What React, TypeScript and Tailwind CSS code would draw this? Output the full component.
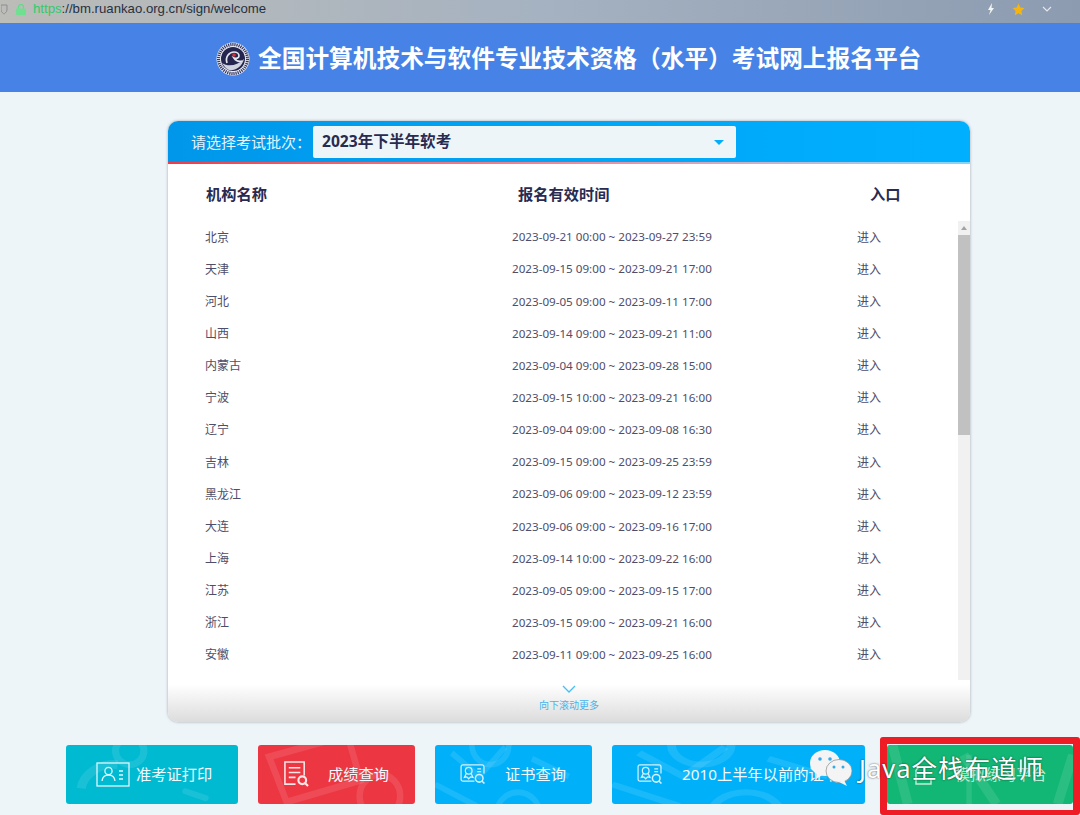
import type { ReactNode } from "react";

const rows = [
  ["北京", "2023-09-21 00:00 ~ 2023-09-27 23:59"],
  ["天津", "2023-09-15 09:00 ~ 2023-09-21 17:00"],
  ["河北", "2023-09-05 09:00 ~ 2023-09-11 17:00"],
  ["山西", "2023-09-14 09:00 ~ 2023-09-21 11:00"],
  ["内蒙古", "2023-09-04 09:00 ~ 2023-09-28 15:00"],
  ["宁波", "2023-09-15 10:00 ~ 2023-09-21 16:00"],
  ["辽宁", "2023-09-04 09:00 ~ 2023-09-08 16:30"],
  ["吉林", "2023-09-15 09:00 ~ 2023-09-25 23:59"],
  ["黑龙江", "2023-09-06 09:00 ~ 2023-09-12 23:59"],
  ["大连", "2023-09-06 09:00 ~ 2023-09-16 17:00"],
  ["上海", "2023-09-14 10:00 ~ 2023-09-22 16:00"],
  ["江苏", "2023-09-05 09:00 ~ 2023-09-15 17:00"],
  ["浙江", "2023-09-15 09:00 ~ 2023-09-21 16:00"],
  ["安徽", "2023-09-11 09:00 ~ 2023-09-25 16:00"],
];

function Logo() {
  return (
    <svg width="34" height="34" viewBox="0 0 34 34" className="shrink-0">
      <circle cx="17" cy="17" r="16.5" fill="#e9ebf2" />
      <circle cx="17" cy="17" r="14.5" fill="none" stroke="#34365f" strokeWidth="3" strokeDasharray="1.2 0.9" />
      <circle cx="17" cy="17" r="12" fill="#24264f" />
      <path d="M6 21c6 4 15 3 22-4-2 8-9 12-15 11-3-1-5-4-7-7z" fill="#cfd3de" />
      <path d="M11 21c-2-6 2-11 7-11 3 0 5 2 5 4s-3 3-5 2c2 3 5 4 8 3" fill="none" stroke="#e4e7ee" strokeWidth="1.7" />
      <circle cx="18" cy="13" r="1.8" fill="#d5303c" />
    </svg>
  );
}

function CardIcon() {
  return (
    <svg width="35" height="25" viewBox="0 0 35 25" fill="none" stroke="#dff6fa" strokeWidth="1.3" className="shrink-0">
      <rect x="1" y="1" width="32" height="23" />
      <circle cx="12.5" cy="9" r="3.6" />
      <path d="M6 19c.5-4 3-6 6.500-6s6 2 6.500 6" />
      <path d="M23 9h4M23 13h4M23 17h4" strokeWidth="1.6" />
    </svg>
  );
}

function ScoreIcon() {
  return (
    <svg width="26" height="26" viewBox="0 0 27 27" fill="none" stroke="#fde6e8" strokeWidth="1.6" className="shrink-0">
      <path d="M13 24H2V1h20v14" />
      <path d="M6 7h12M6 12h12M6 17h7" />
      <circle cx="20" cy="20" r="4" strokeWidth="2.2" />
      <path d="M23 23l3 3" strokeWidth="2.2" />
    </svg>
  );
}

function CertIcon() {
  return (
    <svg width="26" height="21" viewBox="0 0 27 22" fill="none" stroke="#d5f1fe" strokeWidth="1.3" className="shrink-0">
      <path d="M15 18H3a2 2 0 0 1-2-2V3a2 2 0 0 1 2-2h20a2 2 0 0 1 2 2v7" />
      <circle cx="9" cy="7" r="3.500" />
      <path d="M6.500 10l-2 4 2.500-.5 2 2 2-2 2.500.5-2-4" />
      <path d="M18 5h4M18 8h4" />
      <circle cx="20" cy="15" r="4" strokeWidth="1.600" />
      <path d="M23 18l2.500 2.500" strokeWidth="1.600" />
    </svg>
  );
}

function ExamIcon() {
  return (
    <svg width="22" height="24" viewBox="0 0 22 24" fill="none" stroke="#bff0d8" strokeWidth="1.4" className="shrink-0">
      <path d="M2 8v14h15v-5" />
      <path d="M2 8l3-3" />
    </svg>
  );
}

function Pattern({ kind }: { kind: "ring" | "page" | "star" | "bars" }) {
  return (
    <svg viewBox="0 0 170 60" preserveAspectRatio="none" fill="none" stroke="#ffffff" strokeOpacity="0.1" className="absolute inset-0 h-full w-full">
      {kind === "ring" && (
        <>
          <circle cx="63" cy="6" r="14" strokeWidth="7" />
          <path d="M15 44c2-14 18-26 36-24" strokeWidth="9" />
          <path d="M118 47l20 7" strokeWidth="6" strokeLinecap="round" />
        </>
      )}
      {kind === "page" && (
        <>
          <path d="M12 12l85-22 14 46-80 22z" strokeWidth="7" />
          <circle cx="132" cy="52" r="22" strokeWidth="7" />
        </>
      )}
      {kind === "star" && (
        <>
          <path d="M18 8l30 24 28-30" strokeWidth="6" />
          <circle cx="60" cy="0" r="20" strokeWidth="6" />
          <path d="M0 40l45 22" strokeWidth="6" />
          <circle cx="90" cy="72" r="24" strokeWidth="6" />
          <path d="M105 14l40 18" strokeWidth="6" />
        </>
      )}
      {kind === "bars" && (
        <>
          <path d="M5 0l14 60" strokeWidth="9" />
          <path d="M70 10l30 50" strokeWidth="9" />
          <path d="M75 10v50" strokeWidth="5" />
          <path d="M170 10l-14 50" strokeWidth="9" />
        </>
      )}
    </svg>
  );
}

function QuickButton({
  className,
  icon,
  label,
  kind,
  labelClass,
}: {
  className: string;
  icon: ReactNode;
  label: string;
  kind: "ring" | "page" | "star" | "bars";
  labelClass: string;
}) {
  return (
    <div className={`relative flex h-[59px] shrink-0 items-center overflow-hidden rounded-[3px] text-[15.250px] text-[#f2fbff] ${className}`}>
      <Pattern kind={kind} />
      <div className={`relative flex items-center whitespace-nowrap pb-[1px] ${labelClass}`}>
        {icon}
        <span>{label}</span>
      </div>
    </div>
  );
}

function Wechat() {
  return (
    <svg width="44" height="38" viewBox="0 0 44 38" className="shrink-0">
      <ellipse cx="16" cy="14" rx="15" ry="13" fill="#f4f4f4" />
      <path d="M8 23l-1 7 8-5z" fill="#f4f4f4" />
      <circle cx="11" cy="10" r="1.800" fill="#3aa7e8" />
      <circle cx="21" cy="10" r="1.800" fill="#3aa7e8" />
      <ellipse cx="30" cy="22" rx="13" ry="11.500" fill="#f4f4f4" stroke="#8a8a8a" strokeWidth="0.7" />
      <path d="M35 31l3 6-8-4z" fill="#f4f4f4" />
      <circle cx="25" cy="18" r="1.500" fill="#3aa7e8" />
      <circle cx="34" cy="18" r="1.500" fill="#3aa7e8" />
    </svg>
  );
}

export default function App() {
  return (
    <div className="relative flex h-[815px] w-[1080px] flex-col overflow-hidden bg-[#eef5f9] font-['Noto_Sans','Noto_Sans_CJK_SC',sans-serif]">
      <div className="flex h-[24px] shrink-0 items-center bg-gradient-to-r from-[#bcbcb8] via-[#a5b2c1] to-[#8c9bb0] pb-[6px] pl-[1px] pr-[28px] text-[13.200px] text-[#26303f] shadow-[inset_0_-1px_0_#6f7d90]">
        <svg width="7" height="11" viewBox="0 0 7 11" className="shrink-0" fill="none" stroke="#8b8f92">
          <path d="M0 1h6v5c0 2-3 4-3 4S0 8 0 6z" />
        </svg>
        <svg width="10" height="11" viewBox="0 0 10 11" className="ml-[8px] shrink-0">
          <path d="M2.500 5V3a2.500 2.500 0 0 1 5 0v2" fill="none" stroke="#5fdc8a" strokeWidth="1.200" />
          <rect y="4.500" width="10" height="6.500" rx="1" fill="#6ee08f" />
        </svg>
        <span className="ml-[7px] whitespace-nowrap font-['Liberation_Sans',sans-serif]">
          <span className="text-[#31c96e]">https</span>://bm.ruankao.org.cn/sign/welcome
        </span>
        <div className="ml-auto flex items-center">
          <svg width="8" height="12" viewBox="0 0 8 12" fill="#f4f4f4">
            <path d="M5 0L1 7h2.500L2 12l5-7H4.500z" />
          </svg>
          <svg width="13" height="13" viewBox="0 0 24 24" fill="#f6b40e" className="ml-[17px]">
            <path d="M12 1l3.400 7.300 7.600 1-5.600 5.400 1.400 8L12 18.800 5.200 22.700l1.400-8L1 9.300l7.600-1z" />
          </svg>
          <svg width="10" height="6" viewBox="0 0 10 6" fill="none" stroke="#e6e8ec" strokeWidth="1.100" className="ml-[17px]">
            <path d="M1 1l4 4 4-4" />
          </svg>
        </div>
      </div>

      <header className="flex h-[68px] shrink-0 items-center bg-[#4783e6] pl-[216px] pt-[2px]">
        <Logo />
        <h1 className="ml-[8px] whitespace-nowrap text-[23.700px] font-bold text-white">全国计算机技术与软件专业技术资格（水平）考试网上报名平台</h1>
      </header>

      <main className="ml-[168px] mt-[29px] flex h-[601px] w-[802px] shrink-0 flex-col overflow-hidden rounded-[10px] bg-white shadow-[0_0_3px_rgba(90,100,110,0.55)]">
        <div className="relative flex h-[43px] shrink-0 items-center bg-gradient-to-r from-[#0097ea] via-[#00a5f6] to-[#00b0ff] pb-[1px] pl-[23px]">
          <span className="whitespace-nowrap text-[15px] text-[#e4f3fd]">请选择考试批次：</span>
          <div className="ml-[2px] flex h-[32px] w-[423px] items-center justify-between rounded-[2px] bg-[#eef5f9] pl-[9px] pr-[12px] text-[15.600px] font-bold text-[#2a2a50]">
            <span>2023年下半年软考</span>
            <span className="h-0 w-0 border-x-[5px] border-t-[5px] border-x-transparent border-t-[#00aefc]" />
          </div>
          <div className="absolute inset-x-0 bottom-0 h-[2px] bg-gradient-to-r from-[#ee3b48] via-[#ee8a9a] to-[#7fd6ff]" />
        </div>

        <div className="flex h-[57px] shrink-0 items-center pt-[4px] text-[15.250px] font-bold text-[#2a2a50]">
          <span className="ml-[38px] w-[312px]">机构名称</span>
          <span className="w-[352px]">报名有效时间</span>
          <span>入口</span>
        </div>

        <div className="flex h-[459px] shrink-0">
          <div className="flex-1">
            {rows.map(([name, time]) => (
              <div key={name} className="flex h-[32.150px] items-center text-[12px] text-[#4e4e6a]">
                <span className="ml-[37px] w-[307px] pt-[1px]">{name}</span>
                <span className="w-[345px] whitespace-nowrap text-[11.650px]">{time}</span>
                <span className="pt-[1px]">进入</span>
              </div>
            ))}
          </div>
          <div className="flex w-[12px] shrink-0 flex-col items-center bg-[#f1f1f1]">
            <span className="mt-[5px] h-0 w-0 border-x-[3.500px] border-b-[4px] border-x-transparent border-b-[#a3a3a3]" />
            <div className="mt-[5px] h-[200px] w-full bg-[#c1c1c1]" />
          </div>
        </div>

        <div className="flex flex-1 flex-col items-center bg-gradient-to-b from-white from-[10%] to-[#dcdcdc]">
          <svg width="14" height="8" viewBox="0 0 14 8" fill="none" stroke="#45c0f5" strokeWidth="1.300" className="mt-[5px]">
            <path d="M1 1l6 6 6-6" />
          </svg>
          <span className="mt-[5px] text-[10px] leading-[14px] text-[#45b5ee]">向下滚动更多</span>
        </div>
      </main>

      <div className="mt-[23px] flex pl-[66px]">
        <QuickButton className="w-[172px] bg-[#00bad2]" kind="ring" label="准考证打印" labelClass="ml-[30px] gap-[5px]" icon={<CardIcon />} />
        <QuickButton className="ml-[20px] w-[157px] bg-[#ec3743]" kind="page" label="成绩查询" labelClass="ml-[25px] gap-[19px]" icon={<ScoreIcon />} />
        <QuickButton className="ml-[20px] w-[157px] bg-[#00b1fa]" kind="star" label="证书查询" labelClass="ml-[25px] gap-[19px]" icon={<CertIcon />} />
        <QuickButton className="ml-[20px] w-[253px] bg-[#00b1fa]" kind="star" label="2010上半年以前的证书" labelClass="ml-[25px] gap-[19px]" icon={<CertIcon />} />
        <QuickButton className="ml-[22px] w-[186px] bg-[#13b775]" kind="bars" label="模拟练习平台" labelClass="ml-[27px] gap-[19px] text-[#bdeed6]" icon={<ExamIcon />} />
      </div>

      <div className="absolute left-[880px] top-[737px] h-[78px] w-[200px] rounded-[3px] border-x-[7px] border-b-[5px] border-t-[7px] border-[#ee1c25]" />

      <div className="absolute left-[809px] top-[749px] flex items-center text-white [text-shadow:0_0_2px_rgba(0,0,0,0.7)]">
        <Wechat />
        <span className="ml-[6px] whitespace-nowrap text-[25.500px] tracking-[1px]">Java全栈布道师</span>
      </div>
    </div>
  );
}
